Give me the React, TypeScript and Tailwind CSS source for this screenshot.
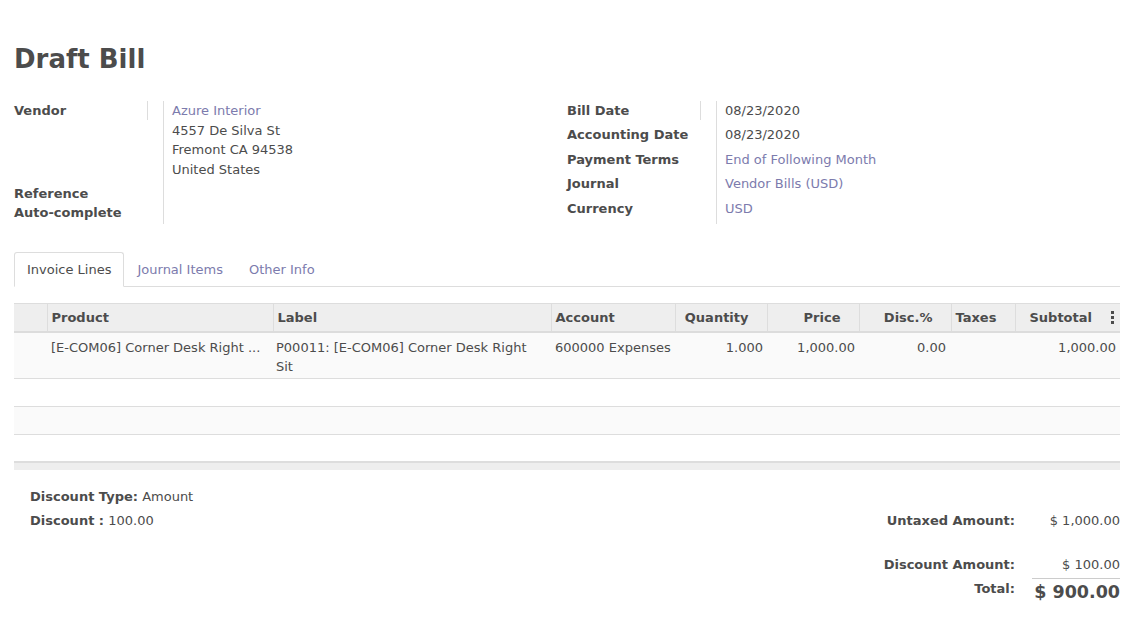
const cols = [33, 226, 278, 124, 92, 92, 92, 64, 105];

function HeadCell({ children, right, last }: { children?: React.ReactNode; right?: boolean; last?: boolean }) {
  return (
    <th
      className={
        'h-[28px] border-b-2 border-[#dcdcdc] px-[4px] align-middle font-bold text-[#4c4c4c] ' +
        (right ? 'pr-[18px] text-right ' : 'text-left ') +
        (last ? '' : 'border-r border-r-[#dddddd]')
      }
    >
      {children}
    </th>
  );
}

function EmptyRow({ striped }: { striped?: boolean }) {
  return (
    <tr className={'h-[28px] border-b border-[#dddddd] ' + (striped ? 'bg-[#fafafa]' : 'bg-white')}>
      <td colSpan={9} />
    </tr>
  );
}

export default function App() {
  return (
    <div className="min-h-[618px] bg-white px-[14px] pt-[42px] text-[13px] leading-[19.5px] text-[#4c4c4c] [font-family:'DejaVu_Sans',sans-serif]">
      <h1 className="text-[26px] font-bold leading-[34px] text-[#4c4c4c]">Draft Bill</h1>

      <div className="mt-[25px] grid w-[1106px] grid-cols-2">
        {/* left group */}
        <div className="flex">
          <div className="w-[149px]">
            <div className="flex h-[19px] w-[134px] items-center border-r border-[#dddddd] font-bold">Vendor</div>
            <div className="mt-[64px] font-bold leading-[19px]">Reference</div>
            <div className="font-bold leading-[19px]">Auto-complete</div>
          </div>
          <div className="h-[123px] border-l border-[#dddddd] pl-[8px]">
            <div className="text-[#7c7bad]">Azure Interior</div>
            <div>4557 De Silva St</div>
            <div>Fremont CA 94538</div>
            <div>United States</div>
          </div>
        </div>
        {/* right group */}
        <div className="flex">
          <div className="w-[149px]">
            <div className="flex h-[19px] w-[134px] items-center border-r border-[#dddddd] font-bold">Bill Date</div>
            <div className="mt-[5px] h-[19.5px] font-bold">Accounting Date</div>
            <div className="mt-[5px] h-[19.5px] font-bold">Payment Terms</div>
            <div className="mt-[5px] h-[19.5px] font-bold">Journal</div>
            <div className="mt-[5px] h-[19.5px] font-bold">Currency</div>
          </div>
          <div className="h-[123px] border-l border-[#dddddd] pl-[8px]">
            <div className="h-[19px]">08/23/2020</div>
            <div className="mt-[5px] h-[19.5px]">08/23/2020</div>
            <div className="mt-[5px] h-[19.5px] text-[#7c7bad]">End of Following Month</div>
            <div className="mt-[5px] h-[19.5px] text-[#7c7bad]">Vendor Bills (USD)</div>
            <div className="mt-[5px] h-[19.5px] text-[#7c7bad]">USD</div>
          </div>
        </div>
      </div>

      {/* tabs */}
      <div className="mt-[28px] flex w-[1106px] border-b border-[#dddddd]">
        <div className="-mb-px flex h-[35px] items-center rounded-t-[3px] border border-[#dddddd] border-b-white bg-white px-[12px] pt-[1px] text-[#4c4c4c]">
          Invoice Lines
        </div>
        <div className="flex h-[34px] items-center px-[13px] pt-[1px] text-[#7c7bad]">Journal Items</div>
        <div className="flex h-[34px] items-center px-[13px] pt-[1px] text-[#7c7bad]">Other Info</div>
      </div>

      {/* lines table */}
      <table className="mt-[16px] w-[1106px] table-fixed border-collapse">
        <colgroup>
          {cols.map((w, i) => (
            <col key={i} style={{ width: w }} />
          ))}
        </colgroup>
        <thead>
          <tr className="border-t border-[#dddddd] bg-[#eeeeee]">
            <HeadCell />
            <HeadCell>Product</HeadCell>
            <HeadCell>Label</HeadCell>
            <HeadCell>Account</HeadCell>
            <HeadCell right>Quantity</HeadCell>
            <HeadCell right>Price</HeadCell>
            <HeadCell right>Disc.%</HeadCell>
            <HeadCell>Taxes</HeadCell>
            <th className="h-[28px] border-b-2 border-[#dcdcdc] pr-[6px] text-right font-bold">
              <div className="flex items-center justify-end gap-[19px]">
                <span>Subtotal</span>
                <span className="flex flex-col gap-[2px]">
                  <span className="h-[3px] w-[3px] bg-[#4c4c4c]" />
                  <span className="h-[3px] w-[3px] bg-[#4c4c4c]" />
                  <span className="h-[3px] w-[3px] bg-[#4c4c4c]" />
                </span>
              </div>
            </th>
          </tr>
        </thead>
        <tbody>
          <tr className="h-[47px] border-b border-[#dddddd] bg-[#fafafa] align-top">
            <td />
            <td className="overflow-hidden whitespace-nowrap px-[4px] pt-[5px]">[E-COM06] Corner Desk Right ...</td>
            <td className="px-[3px] pt-[5px]">
              P00011: [E-COM06] Corner Desk Right
              <br />
              Sit
            </td>
            <td className="whitespace-nowrap px-[4px] pt-[5px]">600000 Expenses</td>
            <td className="px-[4px] pt-[5px] text-right">1.000</td>
            <td className="px-[4px] pt-[5px] text-right">1,000.00</td>
            <td className="px-[5px] pt-[5px] text-right">0.00</td>
            <td className="px-[4px] pt-[5px]" />
            <td className="px-[4px] pt-[5px] text-right">1,000.00</td>
          </tr>
          <EmptyRow />
          <EmptyRow striped />
          <tr className="h-[27px] bg-white">
            <td colSpan={9} />
          </tr>
        </tbody>
        <tfoot>
          <tr className="h-[8px] border-t-2 border-[#dddddd] bg-[#eeeeee]">
            <td colSpan={9} />
          </tr>
        </tfoot>
      </table>

      {/* bottom */}
      <div className="mt-[17px] flex w-[1106px] justify-between">
        <div className="pl-[16px]">
          <div>
            <span className="font-bold">Discount Type:</span> Amount
          </div>
          <div className="mt-[5px]">
            <span className="font-bold">Discount :</span> 100.00
          </div>
        </div>
        <div className="pt-[24px]">
          <div className="grid grid-cols-[auto_88px] gap-x-[17px]">
            <div className="text-right font-bold">Untaxed Amount:</div>
            <div className="text-right">$ 1,000.00</div>
            <div className="mt-[25px] text-right font-bold">Discount Amount:</div>
            <div className="mt-[25px] text-right">$ 100.00</div>
            <div className="pt-[4px] text-right font-bold">Total:</div>
            <div className="mt-[3px] whitespace-nowrap border-t border-[#cccccc] pt-[1px] text-right text-[17.5px] font-bold leading-[24px]">
              $ 900.00
            </div>
          </div>
        </div>
      </div>
    </div>
  );
}
